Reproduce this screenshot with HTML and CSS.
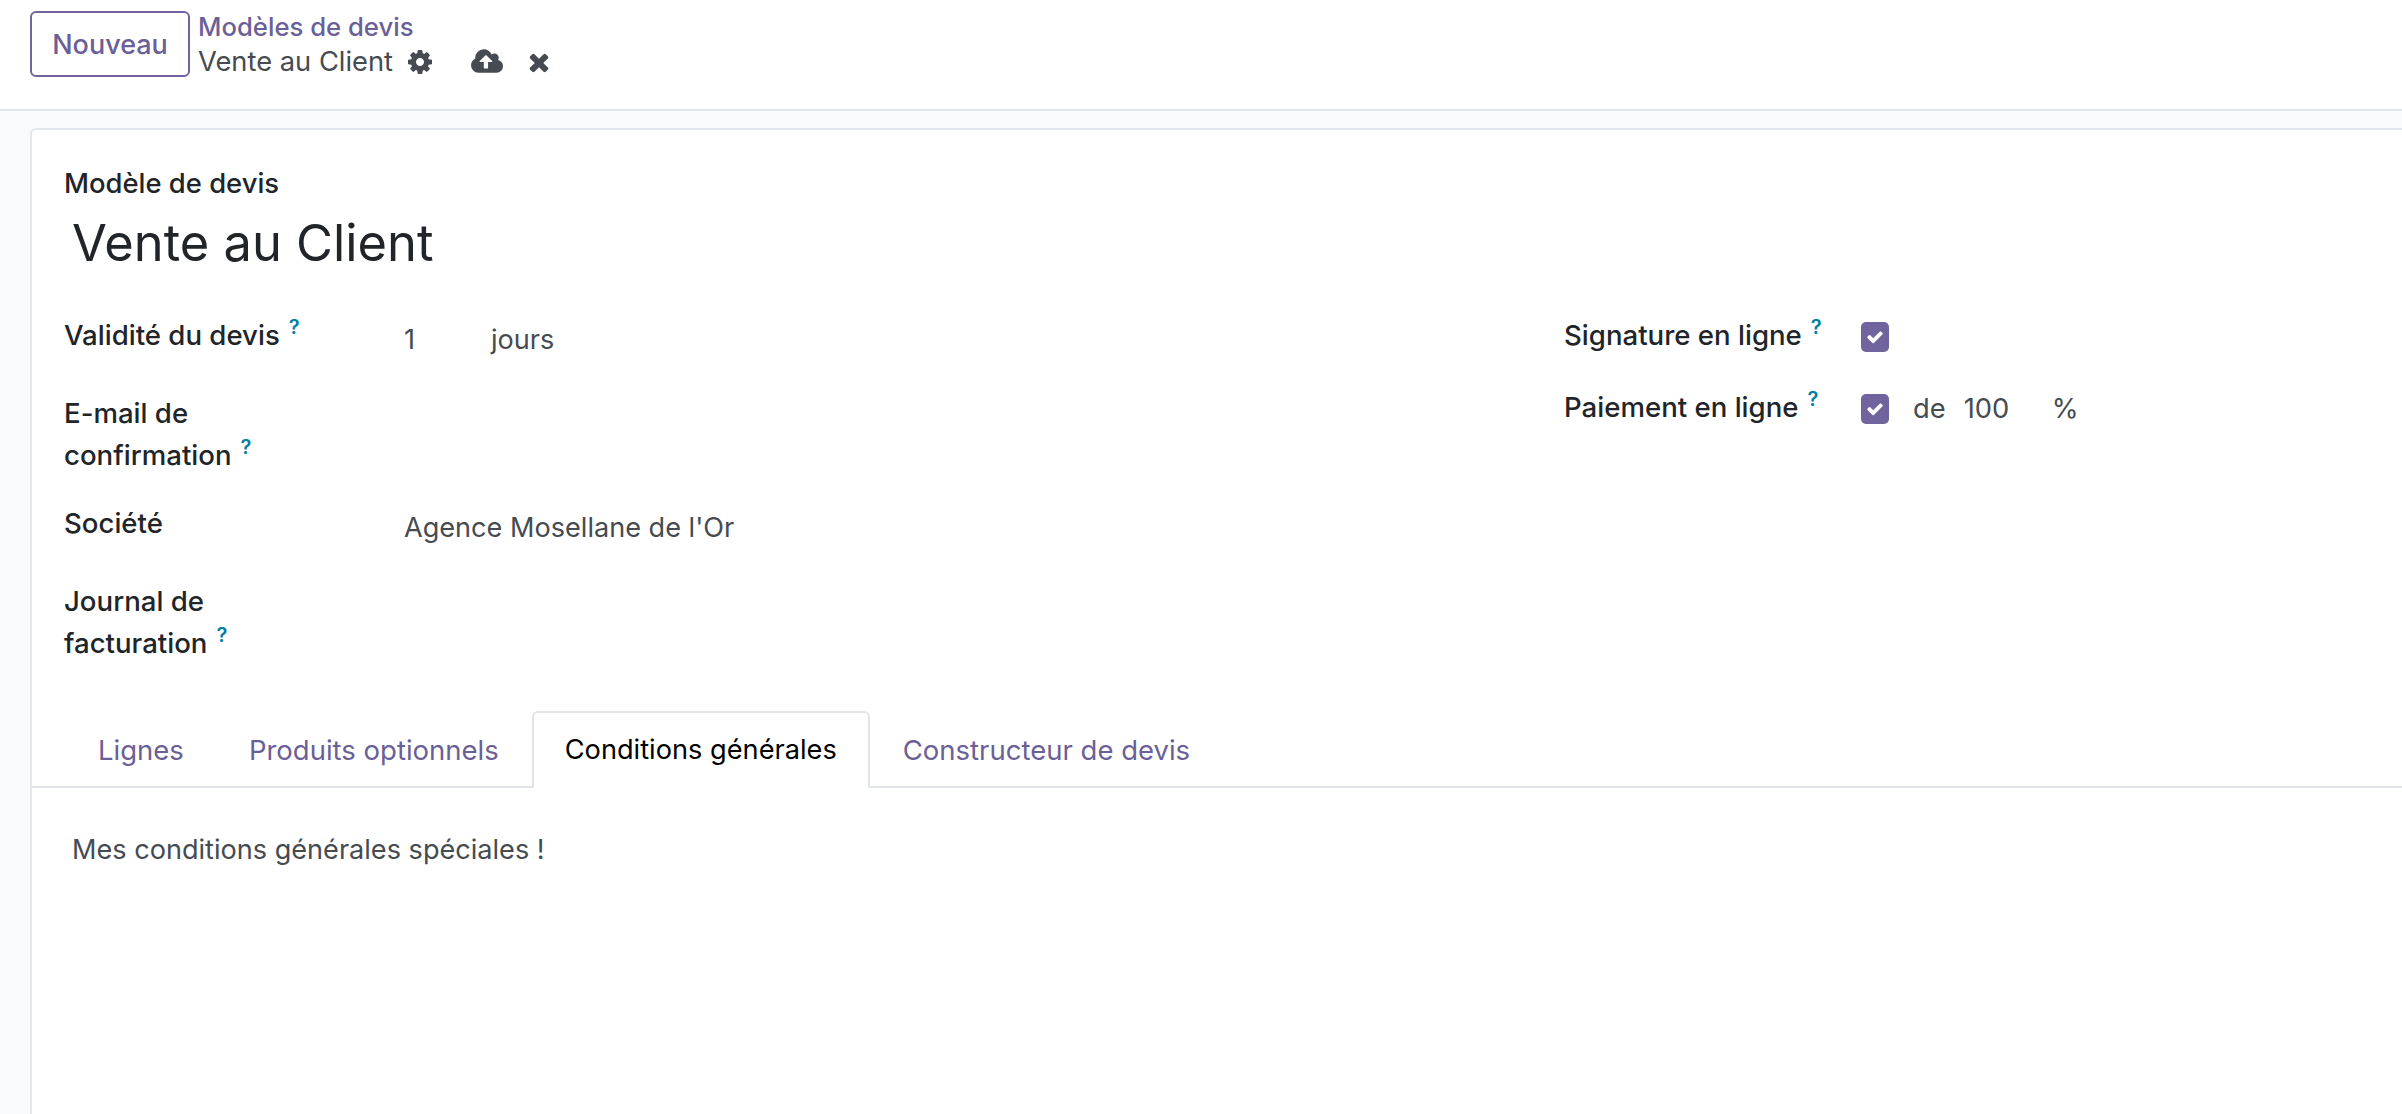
FILE: index.html
```html
<!DOCTYPE html>
<html lang="fr">
<head>
<meta charset="utf-8">
<title>Vente au Client</title>
<link rel="stylesheet" href="styles.css">
</head>
<body>
<header class="panel">
  <button class="btn-new">Nouveau</button>
  <div class="crumbs">
    <a class="crumb-link">Modèles de devis</a>
    <div class="crumb-current">
      <span>Vente au Client</span>
      <svg class="ico ico-cog" viewBox="0 0 1792 1792"><path d="M1152 896q0-106-75-181t-181-75-181 75-75 181 75 181 181 75 181-75 75-181zm512-109v222q0 12-8 23t-20 13l-185 28q-19 54-39 91 35 50 107 138 10 12 10 25t-9 23q-27 37-99 108t-94 71q-12 0-26-9l-138-108q-44 23-91 38-16 136-29 186-7 28-36 28h-222q-14 0-24.500-8.500t-11.500-21.500l-28-184q-49-16-90-37l-141 107q-10 9-25 9-14 0-25-11-126-114-165-168-7-10-7-23 0-12 8-23 15-21 51-66.500t54-70.500q-27-50-41-99l-183-27q-13-2-21-12.500t-8-23.500v-222q0-12 8-23t19-13l186-28q14-46 39-92-40-57-107-138-10-12-10-24 0-10 9-23 26-36 98.500-107.500t94.500-71.500q13 0 26 10l138 107q44-23 91-38 16-136 29-186 7-28 36-28h222q14 0 24.500 8.500t11.500 21.500l28 184q49 16 90 37l142-107q9-9 24-9 13 0 25 10 129 119 165 170 7 8 7 22 0 12-8 23-15 21-51 66.500t-54 70.500q26 50 41 98l183 28q13 2 21 12.500t8 23.500z"/></svg>
      <svg class="ico ico-cloud" viewBox="0 0 1920 1792"><path d="M1280 864q0-14-9-23l-352-352q-9-9-23-9t-23 9l-351 351q-10 12-10 24 0 14 9 23t23 9h224v352q0 13 9.500 22.500t22.500 9.500h192q13 0 22.500-9.500t9.500-22.500v-352h224q13 0 22.500-9.500t9.500-22.500zm640 288q0 159-112.500 271.500t-271.500 112.500h-1088q-185 0-316.500-131.500t-131.500-316.500q0-130 70-240t188-165q-2-30-2-43 0-212 150-362t362-150q156 0 285.500 87t188.500 231q71-62 166-62 106 0 181 75t75 181q0 76-41 138 130 31 213.500 135.500t83.500 238.500z"/></svg>
      <svg class="ico ico-times" viewBox="0 0 1792 1792"><path d="M1490 1322q0 40-28 68l-136 136q-28 28-68 28t-68-28l-294-294-294 294q-28 28-68 28t-68-28l-136-136q-28-28-28-68t28-68l294-294-294-294q-28-28-28-68t28-68l136-136q28-28 68-28t68 28l294 294 294-294q28-28 68-28t68 28l136 136q28 28 28 68t-28 68l-294 294 294 294q28 28 28 68z"/></svg>
    </div>
  </div>
</header>
<main class="content">
  <section class="sheet">
    <div class="head">
      <div class="head-label">Modèle de devis</div>
      <h1 class="title">Vente au Client</h1>
    </div>
    <div class="groups">
      <div class="group group-left">
        <div class="label">Validité du devis<sup class="help">?</sup></div>
        <div class="value"><span class="num">1</span><span>jours</span></div>
        <div class="label">E-mail de<br>confirmation<sup class="help">?</sup></div>
        <div class="value"></div>
        <div class="label">Société</div>
        <div class="value">Agence Mosellane de l'Or</div>
        <div class="label">Journal de<br>facturation<sup class="help">?</sup></div>
        <div class="value"></div>
      </div>
      <div class="group group-right">
        <div class="label">Signature en ligne<sup class="help">?</sup></div>
        <div class="value-check"><span class="check"><svg viewBox="0 0 1792 1792"><path d="M1671 566q0 40-28 68l-724 724-136 136q-28 28-68 28t-68-28l-136-136-362-362q-28-28-28-68t28-68l136-136q28-28 68-28t68 28l294 295 656-657q28-28 68-28t68 28l136 136q28 28 28 68z"/></svg></span></div>
        <div class="label">Paiement en ligne<sup class="help">?</sup></div>
        <div class="value-check"><span class="check"><svg viewBox="0 0 1792 1792"><path d="M1671 566q0 40-28 68l-724 724-136 136q-28 28-68 28t-68-28l-136-136-362-362q-28-28-28-68t28-68l136-136q28-28 68-28t68 28l294 295 656-657q28-28 68-28t68 28l136 136q28 28 28 68z"/></svg></span><span class="de">de</span><span class="pct-num">100</span><span class="pct">%</span></div>
      </div>
    </div>
    <nav class="tabs">
      <a class="tab">Lignes</a>
      <a class="tab">Produits optionnels</a>
      <a class="tab tab-active">Conditions générales</a>
      <a class="tab">Constructeur de devis</a>
    </nav>
    <div class="tab-body">Mes conditions générales spéciales !</div>
  </section>
</main>
</body>
</html>
```
FILE: styles.css
```css
* { box-sizing: border-box; }
html, body { margin: 0; height: 100%; overflow: hidden; }
body {
  display: flex;
  flex-direction: column;
  background: #f9fafb;
  font-family: Inter, "Noto Sans", sans-serif;
  font-size: 27.1px;
  line-height: 42px;
  color: #212529;
}
.panel {
  display: flex;
  align-items: flex-start;
  height: 111px;
  padding: 11px 0 0 30px;
  background: #fff;
  border-bottom: 2px solid #e1e4e8;
  flex: none;
}
.btn-new {
  width: 160px;
  height: 66px;
  padding: 0;
  margin-right: 8px;
  background: #fff;
  border: 2px solid #71639e;
  border-radius: 6px;
  color: #6b5f98;
  font: 500 27px Inter, sans-serif;
}
.crumbs { display: flex; flex-direction: column; }
.crumb-link { color: #6b5f98; font-weight: 500; font-size: 25.7px; line-height: 34px; margin-top: -1px; }
.crumb-current { display: flex; align-items: center; color: #454b51; font-size: 27.3px; line-height: 34px; margin-top: 1px; }
.ico { fill: #454b51; flex: none; }
.ico-cog { width: 28px; height: 28px; margin-left: 13px; }
.ico-cloud { width: 32px; height: 30px; margin-left: 37px; }
.ico-times { width: 28px; height: 28px; margin-left: 22px; }
.content { flex: 1; padding: 17px 0 0 30px; min-height: 0; }
.sheet {
  height: 100%;
  background: #fff;
  border: 2px solid #e3e6ea;
  border-right: 0;
  border-bottom: 0;
  border-radius: 6px 0 0 0;
}
.head { padding: 33px 0 0 32px; }
.head-label { font-weight: 500; font-size: 27.4px; line-height: 40px; }
.title { margin: 0 0 0 8px; font-size: 50.6px; font-weight: 400; line-height: 79px; color: #212529; }
.groups { display: flex; padding: 32px 0 0 32px; }
.group { display: grid; row-gap: 26px; align-content: start; }
.group-left { grid-template-columns: 340px auto; width: 1500px; }
.group-right { grid-template-columns: 297px auto; row-gap: 26px; }
.label { font-weight: 500; font-size: 27.6px; line-height: 42px; }
.value { min-height: 52px; padding-top: 5px; color: #454b51; display: flex; }
.num { width: 87px; }
.help { color: #0180a5; font-size: 20px; font-weight: 600; margin-left: 9px; line-height: 0; vertical-align: 11px; }
.value-check { display: flex; align-items: center; height: 46px; color: #454b51; font-size: 27.3px; }
.check {
  display: flex;
  align-items: center;
  justify-content: center;
  width: 28px;
  height: 30px;
  border-radius: 5px;
  background: #71639e;
}
.check svg { width: 18px; height: 18px; fill: #fff; }
.de { margin-left: 24px; }
.pct-num { margin-left: 18px; width: 88px; }
.tabs {
  display: flex;
  margin-top: 47px;
  padding-left: 33px;
  border-bottom: 2px solid #e1e4e8;
  height: 77px;
}
.tab {
  display: block;
  height: 77px;
  padding: 16px 31px 0;
  color: #6b5f98;
  font-size: 27.5px;
  border: 2px solid transparent;
  border-bottom: 0;
  border-radius: 6px 6px 0 0;
}
.tab:first-child { padding-right: 30px; }
.tab-active {
  color: #000;
  background: #fff;
  border-color: #e1e4e8;
  font-size: 27.2px;
}
.tab-body { padding: 41px 0 0 40px; color: #454b51; }
```
